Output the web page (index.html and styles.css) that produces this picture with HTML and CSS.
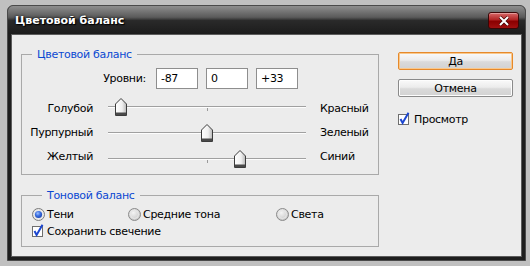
FILE: index.html
```html
<!DOCTYPE html>
<html lang="ru">
<head>
    <meta charset="UTF-8">
    <title>Цветовой баланс</title>
    <link rel="stylesheet" href="styles.css">
</head>
<body>
    <div class="window">
        <div class="titlebar">
            <span class="title">Цветовой баланс</span>
            <button class="close" aria-label="Закрыть">
                <svg width="12" height="10" viewBox="0 0 12 10">
                    <path d="M2 1 L10 9 M10 1 L2 9" stroke="#3a0000" stroke-width="3.2" fill="none"/>
                    <path d="M2 1 L10 9 M10 1 L2 9" stroke="#fff" stroke-width="2" fill="none"/>
                </svg>
            </button>
        </div>
        <div class="client">
            <div class="main">
                <fieldset class="group color-group">
                    <legend>Цветовой баланс</legend>
                    <div class="levels">
                        <label class="levels-label">Уровни:</label>
                        <input type="text" value="-87">
                        <input type="text" value="0">
                        <input type="text" value="+33">
                    </div>
                    <div class="sliders">
                        <div class="labels labels-left">
                            <span>Голубой</span>
                            <span>Пурпурный</span>
                            <span>Желтый</span>
                        </div>
                        <div class="tracks">
                            <div class="track">
                                <svg class="thumb" style="left: 7px" width="12" height="18" viewBox="0 0 12 18"><use href="#thumb"/></svg>
                            </div>
                            <div class="track">
                                <svg class="thumb" style="left: 93px" width="12" height="18" viewBox="0 0 12 18"><use href="#thumb"/></svg>
                            </div>
                            <div class="track">
                                <svg class="thumb" style="left: 126px" width="12" height="18" viewBox="0 0 12 18"><use href="#thumb"/></svg>
                            </div>
                        </div>
                        <div class="labels labels-right">
                            <span>Красный</span>
                            <span>Зеленый</span>
                            <span>Синий</span>
                        </div>
                    </div>
                </fieldset>

                <fieldset class="group tone-group">
                    <legend>Тоновой баланс</legend>
                    <div class="radios">
                        <label class="option">
                            <svg width="13" height="13" viewBox="0 0 13 13"><use href="#radio-on"/></svg>
                            <span>Тени</span>
                        </label>
                        <label class="option">
                            <svg width="13" height="13" viewBox="0 0 13 13"><use href="#radio-off"/></svg>
                            <span>Средние тона</span>
                        </label>
                        <label class="option">
                            <svg width="13" height="13" viewBox="0 0 13 13"><use href="#radio-off"/></svg>
                            <span>Света</span>
                        </label>
                    </div>
                    <label class="option check-row">
                        <svg width="13" height="14" viewBox="0 0 13 14"><use href="#check"/></svg>
                        <span>Сохранить свечение</span>
                    </label>
                </fieldset>
            </div>

            <div class="side">
                <button class="btn btn-default">Да</button>
                <button class="btn">Отмена</button>
                <label class="option preview">
                    <svg width="13" height="14" viewBox="0 0 13 14"><use href="#check"/></svg>
                    <span>Просмотр</span>
                </label>
            </div>
        </div>
    </div>

    <svg width="0" height="0" class="defs">
        <defs>
            <linearGradient id="thumbFill" x1="0" y1="0" x2="1" y2="0">
                <stop offset="0" stop-color="#ffffff"/>
                <stop offset="0.6" stop-color="#f0f0f0"/>
                <stop offset="1" stop-color="#b8b8b8"/>
            </linearGradient>
            <radialGradient id="radioFill" cx="0.4" cy="0.35" r="0.7">
                <stop offset="0" stop-color="#f4f4f4"/>
                <stop offset="1" stop-color="#c4c4c4"/>
            </radialGradient>
            <radialGradient id="dotFill" cx="0.4" cy="0.35" r="0.7">
                <stop offset="0" stop-color="#9ec0ff"/>
                <stop offset="0.5" stop-color="#3a6ee0"/>
                <stop offset="1" stop-color="#1c44b0"/>
            </radialGradient>
            <g id="thumb">
                <path d="M0.5 17.5 V6 L6 0.5 L11.5 6 V17.5 Z" fill="url(#thumbFill)" stroke="#3c3c3c"/>
                <rect x="1" y="14.5" width="10" height="2.5" fill="#4a4a4a"/>
            </g>
            <g id="radio-off">
                <circle cx="6.5" cy="6.5" r="6" fill="url(#radioFill)" stroke="#8a8a8a"/>
                <circle cx="6.5" cy="6.5" r="4" fill="none" stroke="#e8e8e8"/>
            </g>
            <g id="radio-on">
                <circle cx="6.5" cy="6.5" r="6" fill="#e8e8e8" stroke="#7a7a7a"/>
                <circle cx="6.5" cy="6.5" r="3.6" fill="url(#dotFill)"/>
            </g>
            <g id="check">
                <rect x="0.5" y="2.5" width="10" height="10" fill="#fff" stroke="#6e6e6e"/>
                <path d="M2.5 7 L4.6 11 L10.5 0.8" stroke="#1d47d0" stroke-width="2" fill="none"/>
            </g>
        </defs>
    </svg>
</body>
</html>
```

FILE: styles.css
```css
body {
    margin: 0;
    width: 530px;
    height: 266px;
    background-color: #c0c0c0;
    font-family: "DejaVu Sans", Verdana, sans-serif;
    font-size: 11px;
    letter-spacing: -0.3px;
    color: #000;
    overflow: hidden;
}
.defs {
    position: absolute;
}
.window {
    margin: 5px 0 0 7px;
    width: 519px;
    height: 256px;
    box-sizing: border-box;
    background-color: #1e1e1e;
    border: 1px solid #4a4a4a;
    border-radius: 6px 6px 0 0;
    padding: 0 3px 3px 3px;
    display: flex;
    flex-direction: column;
}
.titlebar {
    height: 28px;
    margin: 0 -3px;
    padding: 0 6px 0 7px;
    border-radius: 5px 5px 0 0;
    background: linear-gradient(#8e8e8e 0, #5a5a5a 40%, #2a2a2a 52%, #1c1c1c 100%);
    display: flex;
    align-items: center;
    justify-content: space-between;
}
.title {
    color: #fff;
    font-weight: bold;
    font-size: 11px;
    letter-spacing: 0;
    text-shadow: 0 0 3px #000, 1px 1px 1px #000;
}
.close {
    width: 31px;
    height: 17px;
    margin-top: 1px;
    padding: 0;
    border: 1px solid #3a0606;
    border-radius: 3px;
    background: linear-gradient(#d86868 0, #b02424 45%, #8a0000 55%, #a01010 100%);
    box-shadow: inset 0 1px 0 rgba(255, 255, 255, 0.35);
    display: flex;
    align-items: center;
    justify-content: center;
}
.client {
    flex: 1;
    background-color: #ececec;
    border: 1px solid #5c5c5c;
    display: flex;
    gap: 19px;
    padding: 13px 0 0 9px;
}
.group {
    margin: 0;
    padding: 0;
    border: 1px solid #a9a9a9;
    width: 358px;
    box-sizing: border-box;
}
.group legend {
    margin-left: 10px;
    padding: 0 5px;
    line-height: 13px;
    color: #0a48d2;
}
.color-group {
    padding: 7px 0 5px 0;
}
.levels {
    display: flex;
    align-items: center;
    gap: 8px;
}
.levels-label {
    width: 124px;
    text-align: right;
    margin-right: 2px;
}
.levels input {
    width: 42px;
    height: 21px;
    box-sizing: border-box;
    border: 1px solid #8e8e8e;
    background: #fff;
    padding: 0 4px;
    font-family: inherit;
    font-size: 11px;
    letter-spacing: inherit;
    margin: 0;
}
.sliders {
    display: flex;
    margin-top: 8px;
}
.labels {
    display: flex;
    flex-direction: column;
    line-height: 24px;
}
.labels-left {
    width: 71px;
    text-align: right;
}
.labels-right {
    margin-left: 14px;
}
.tracks {
    margin-left: 15px;
    padding-top: 1px;
    display: flex;
    flex-direction: column;
    gap: 8px;
}
.track {
    position: relative;
    width: 198px;
    height: 18px;
}
.track::before {
    content: "";
    position: absolute;
    left: 0;
    right: 0;
    top: 8px;
    height: 1px;
    background: #a0a0a0;
    border-bottom: 1px solid #fdfdfd;
}
.track::after {
    content: "";
    position: absolute;
    left: 99px;
    top: 10px;
    width: 1px;
    height: 3px;
    background: #9a9a9a;
}
.thumb {
    position: absolute;
    top: 0;
    z-index: 1;
}
.tone-group {
    margin-top: 14px;
    padding: 6px 0 8px 10px;
}
.radios {
    display: grid;
    grid-template-columns: 96px 148px auto;
}
.option {
    display: flex;
    align-items: center;
    gap: 2px;
    line-height: 13px;
}
.check-row {
    margin-top: 3px;
}
.side {
    width: 115px;
    padding-top: 4px;
    display: flex;
    flex-direction: column;
}
.btn {
    height: 18px;
    padding: 0;
    border: 1px solid #8a8a8a;
    border-radius: 2px;
    background: linear-gradient(#fafafa 0, #ececec 45%, #dadada 55%, #d2d2d2 100%);
    box-shadow: inset 0 0 0 1px #fdfdfd;
    font-family: inherit;
    font-size: 11px;
    letter-spacing: inherit;
    color: #000;
}
.btn + .btn {
    margin-top: 9px;
}
.btn-default {
    border-color: #e6892a;
    box-shadow: inset 0 0 0 1px #f9c88c;
}
.preview {
    margin-top: 15px;
    gap: 3px;
}
```
